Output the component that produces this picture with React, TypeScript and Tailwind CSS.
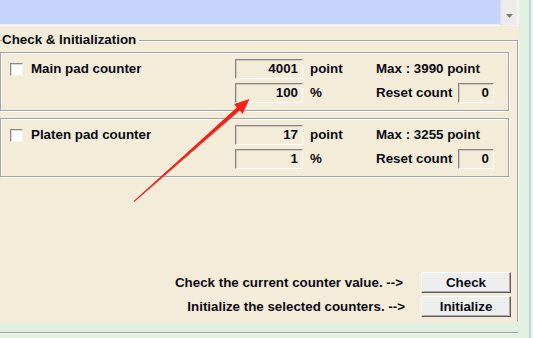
import React from 'react';

// Windows-classic style counter maintenance panel

function Sunken({ value, className }: { value: string; className: string }) {
  return (
    <div
      className={`h-[20px] flex items-center justify-end pr-[4px] border border-t-[#858585] border-l-[#858585] border-b-white border-r-white shadow-[inset_1px_1px_0_#cfcabb] ${className}`}
    >
      {value}
    </div>
  );
}

function CheckBox() {
  return (
    <div className="w-[13px] h-[13px] bg-white border border-t-[#8a8a8a] border-l-[#8a8a8a] border-b-[#f4f4f4] border-r-[#f4f4f4] shadow-[inset_1px_1px_0_#d8d8d8]" />
  );
}

interface CounterProps {
  label: string;
  points: string;
  percent: string;
  max: string;
  reset: string;
}

function CounterBox({ label, points, percent, max, reset }: CounterProps) {
  return (
    <div className="w-[509px] border border-[#a3a3a3] shadow-[inset_1px_1px_0_#fff,1px_1px_0_#fff] pt-[6px] pb-[7px] flex flex-col gap-[4px]">
      <div className="flex h-[20px] items-center">
        <div className="w-[234px] flex items-center pl-[9px]">
          <CheckBox />
          <span className="ml-[8px]">{label}</span>
        </div>
        <Sunken value={points} className="w-[68px]" />
        <div className="w-[73px] pl-[7px]">point</div>
        <div>Max : {max} point</div>
      </div>
      <div className="flex h-[20px] items-center">
        <div className="w-[234px]" />
        <Sunken value={percent} className="w-[68px]" />
        <div className="w-[73px] pl-[7px]">%</div>
        <div className="w-[82px]">Reset count</div>
        <Sunken value={reset} className="w-[36px]" />
      </div>
    </div>
  );
}

function WinButton({ children }: { children: React.ReactNode }) {
  return (
    <div className="w-[90px] h-[21px] flex items-center justify-center bg-[#eeeeee] border border-t-white border-l-white border-b-[#5e5e5e] border-r-[#5e5e5e] shadow-[inset_-1px_-1px_0_#a8a8a8]">
      {children}
    </div>
  );
}

export default function App() {
  return (
    <div className="relative w-[533px] h-[338px] overflow-hidden flex bg-[#e2f0e2] text-[13.35px] font-bold text-[#0a0a14] font-['Liberation_Sans',Arial,sans-serif] leading-none">
      <div className="w-[519px] flex flex-col">
        {/* top list strip with scrollbar */}
        <div className="h-[26px] flex bg-[#f4f4f4]">
          <div className="w-[500px] h-[25px] bg-[#c6d3fb] border-b border-[#eef1fb]" />
          <div className="w-[17px] h-[25px] bg-[#ececec] border-l border-dotted border-[#d6d6d6] flex items-end justify-center pb-[7px]">
            <svg width="7" height="4" viewBox="0 0 7 4">
              <path d="M0 0 H7 L3.5 4 Z" fill="#7a7a7a" />
            </svg>
          </div>
        </div>

        {/* beige dialog area */}
        <div className="h-[296px] bg-[#f3ecd9] pt-[14px]">
          <div className="relative w-[518px] h-[282px] border-t border-r border-[#a3a3a3] shadow-[inset_0_1px_0_#fff,1px_0_0_#fff]">
            <div className="absolute left-[2px] top-[-9px] h-[15px] flex items-center pr-[3px] bg-[#f3ecd9]">
              Check &amp; Initialization
            </div>
            <div className="pt-[11px] flex flex-col gap-[7px]">
              <CounterBox label="Main pad counter" points="4001" percent="100" max="3990" reset="0" />
              <CounterBox label="Platen pad counter" points="17" percent="1" max="3255" reset="0" />
            </div>
            <div className="mt-[95px] w-[511px] flex flex-col items-end gap-[3px]">
              <div className="flex items-center gap-[18px]">
                <span>Check the current counter value. --&gt;</span>
                <WinButton>Check</WinButton>
              </div>
              <div className="flex items-center gap-[16px]">
                <span>Initialize the selected counters. --&gt;</span>
                <WinButton>Initialize</WinButton>
              </div>
            </div>
          </div>
        </div>

        {/* status area */}
        <div className="h-[16px] pt-[10px]">
          <div className="w-[518px] h-[1px] bg-[#a0a0a0] shadow-[0_1px_0_#f4f8f4]" />
        </div>
      </div>

      {/* right window edge */}
      <div className="flex-1 flex">
        <div className="w-[10px]" />
        <div className="w-[2px] bg-[#bcd3dc]" />
        <div className="flex-1 bg-[#eef6ee]" />
      </div>

      {/* red annotation arrow */}
      <svg className="absolute inset-0 pointer-events-none" width="533" height="338" viewBox="0 0 533 338">
        <polygon
          points="249.5,99 234,104.1 236.8,107.4 133.7,201.1 134.3,201.9 239.8,110.6 242.6,113.9"
          fill="#f0241b"
        />
      </svg>
    </div>
  );
}
